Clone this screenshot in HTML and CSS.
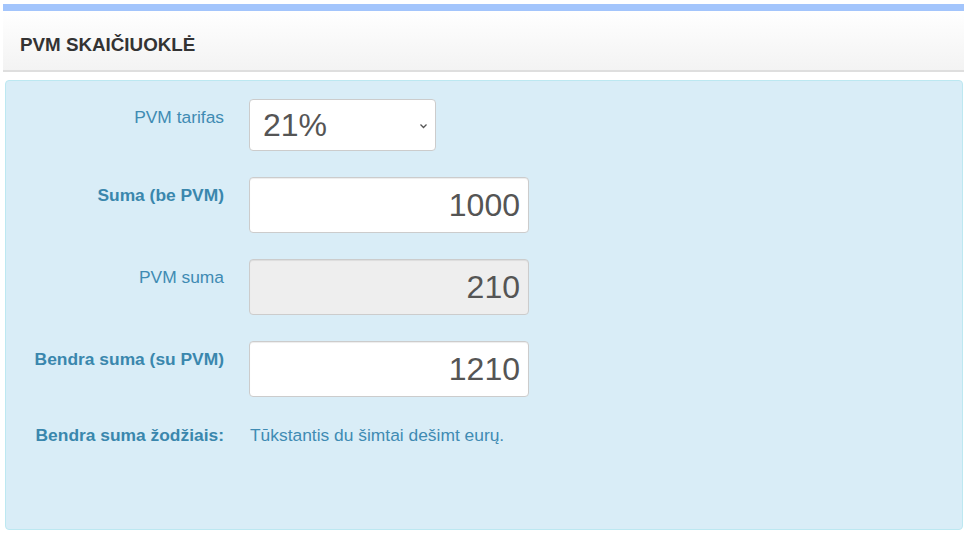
FILE: index.html
```html
<!DOCTYPE html>
<html lang="lt">
<head>
<meta charset="utf-8">
<title>PVM skaičiuoklė</title>
<link rel="stylesheet" href="styles.css">
</head>
<body>
<div class="page">
  <div class="topbar"></div>
  <div class="header"><h1 class="title">PVM SKAIČIUOKLĖ</h1></div>
  <div class="alert">
    <div class="row">
      <label class="label">PVM tarifas</label>
      <div class="select-wrap">
        <select class="select">
          <option>21%</option>
          <option>9%</option>
          <option>5%</option>
          <option>0%</option>
        </select>
        <svg class="chevron" width="9" height="6" viewBox="0 0 9 6"><path d="M1.5 1.5l3 3l3-3" fill="none" stroke="#555" stroke-width="1.3"/></svg>
      </div>
    </div>
    <div class="row">
      <label class="label bold">Suma (be PVM)</label>
      <input class="input" type="text" value="1000">
    </div>
    <div class="row">
      <label class="label">PVM suma</label>
      <input class="input disabled" type="text" value="210" disabled>
    </div>
    <div class="row">
      <label class="label bold">Bendra suma (su PVM)</label>
      <input class="input" type="text" value="1210">
    </div>
    <div class="row last">
      <div class="label bold nopad">Bendra suma žodžiais:</div>
      <div class="words">Tūkstantis du šimtai dešimt eurų.</div>
    </div>
  </div>
</div>
</body>
</html>
```
FILE: styles.css
```css
html, body {
  margin: 0;
  padding: 0;
  background: #fff;
  font-family: "Liberation Sans", Arial, sans-serif;
}
.page {
  margin: 4px 4px 0 3px;
}
.topbar {
  height: 7px;
  background: #a3c5fc;
}
.header {
  padding: 24px 17px 15px;
  background: linear-gradient(#ffffff, #f3f3f3);
  border-bottom: 2px solid #dedede;
}
.title {
  margin: 0;
  font-size: 18.8px;
  line-height: 20px;
  font-weight: bold;
  color: #333;
}
.alert {
  margin: 8px 1px 0 2px;
  padding: 18px 0 84px;
  background: #d9edf7;
  border: 1px solid #bce8f1;
  border-radius: 4px;
}
.row {
  display: grid;
  grid-template-columns: 218px auto;
  column-gap: 25px;
  align-items: start;
  margin-bottom: 26px;
}
.row.last {
  margin-bottom: 0;
  padding-top: 2px;
}
.label {
  text-align: right;
  font-size: 17.4px;
  line-height: 20px;
  color: #3f8bb3;
  padding-top: 8px;
}
.label.bold {
  font-weight: bold;
  color: #3a87ad;
}
.label.nopad {
  padding-top: 0;
}
.words {
  font-size: 17.4px;
  line-height: 20px;
  color: #3f8bb3;
  padding-left: 1px;
}
.select-wrap {
  position: relative;
  width: 187px;
  height: 52px;
}
.select {
  appearance: none;
  -webkit-appearance: none;
  box-sizing: border-box;
  width: 187px;
  height: 52px;
  margin: 0;
  padding: 0 0 0 13px;
  border: 1px solid #ccc;
  border-radius: 4px;
  background: #fff;
  color: #555;
  font-family: "Liberation Sans", Arial, sans-serif;
  font-size: 32px;
}
.chevron {
  position: absolute;
  right: 8px;
  top: 24px;
}
.input {
  box-sizing: border-box;
  width: 280px;
  height: 56px;
  margin: 0;
  padding: 0 8px 0 8px;
  border: 1px solid #ccc;
  border-radius: 4px;
  background: #fff;
  color: #555;
  font-family: "Liberation Sans", Arial, sans-serif;
  font-size: 32px;
  text-align: right;
  box-shadow: inset 0 1px 1px rgba(0,0,0,0.075);
}
.input.disabled {
  background: #eee;
  color: #555;
  -webkit-text-fill-color: #555;
  opacity: 1;
}
```
